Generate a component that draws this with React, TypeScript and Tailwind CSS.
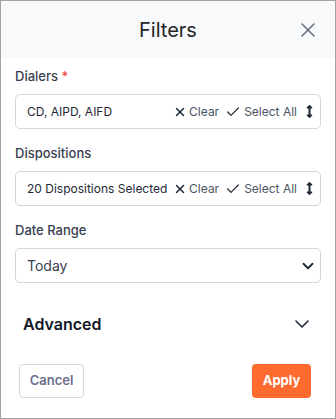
import { X, Check, ChevronDown } from 'lucide-react'
import { FaArrowsAltV } from 'react-icons/fa'

function MultiField({ value }: { value: string }) {
  return (
    <div className="mt-2 flex h-[35px] items-center rounded-[5px] border border-[#d4d6dc] bg-white pl-[11px] pr-[4px] text-[12px]">
      <span className="flex-1 truncate text-[#1f2937]">{value}</span>
      <button className="flex items-center gap-[2px] text-[#4b5563]">
        <X size={14} strokeWidth={2.5} className="text-[#1f2937]" />
        Clear
      </button>
      <button className="ml-[6px] flex items-center gap-[3px] text-[#4b5563]">
        <Check size={16} strokeWidth={1.8} className="text-[#1f2937]" />
        Select All
      </button>
      <FaArrowsAltV size={13} className="ml-[6px] text-[#1f2937]" />
    </div>
  )
}

export default function App() {
  return (
    <div className="flex h-[419px] w-[336px] flex-col border border-[#a3a3a3] bg-white font-['Inter',sans-serif]">
      <div className="grid h-[57px] shrink-0 grid-cols-[1fr_auto_1fr] items-center bg-[#f8f9fb]">
        <div />
        <h1 className="text-[20px] text-[#222428]">Filters</h1>
        <div className="flex justify-end pr-[15px]">
          <X size={24} strokeWidth={1.6} className="text-[#6b7280]" />
        </div>
      </div>

      <div className="flex flex-col gap-[14px] px-[14px] pt-2">
        <div>
          <label className="block text-[13px] font-medium leading-5 text-[#374151]">
            Dialers <span className="text-[#ef4444]">*</span>
          </label>
          <MultiField value="CD, AIPD, AIFD" />
        </div>
        <div>
          <label className="block text-[13px] font-medium leading-5 text-[#374151]">Dispositions</label>
          <MultiField value="20 Dispositions Selected" />
        </div>
        <div>
          <label className="block text-[13px] font-medium leading-5 text-[#374151]">Date Range</label>
          <div className="mt-2 flex h-[35px] items-center rounded-[5px] border border-[#d4d6dc] bg-white pl-[11px] pr-[3px]">
            <span className="flex-1 text-[14px] text-[#374151]">Today</span>
            <ChevronDown size={18} strokeWidth={2.4} className="text-[#1f2937]" />
          </div>
        </div>
      </div>

      <div className="mt-[23px] flex h-[36px] items-center justify-between pl-[22px] pr-[21px]">
        <span className="text-[16px] font-semibold text-[#111827]">Advanced</span>
        <ChevronDown size={24} strokeWidth={1.6} className="text-[#1f2937]" />
      </div>

      <div className="mt-[22px] flex items-center justify-between pl-[18px] pr-[24px]">
        <button className="h-[34px] w-[65px] rounded-[4px] border border-[#d4d6e0] text-[13px] font-semibold text-[#6b6f8c]">
          Cancel
        </button>
        <button className="h-[34px] w-[59px] rounded-[4px] bg-[#ff6b2e] text-[13px] font-bold text-white">
          Apply
        </button>
      </div>
    </div>
  )
}
